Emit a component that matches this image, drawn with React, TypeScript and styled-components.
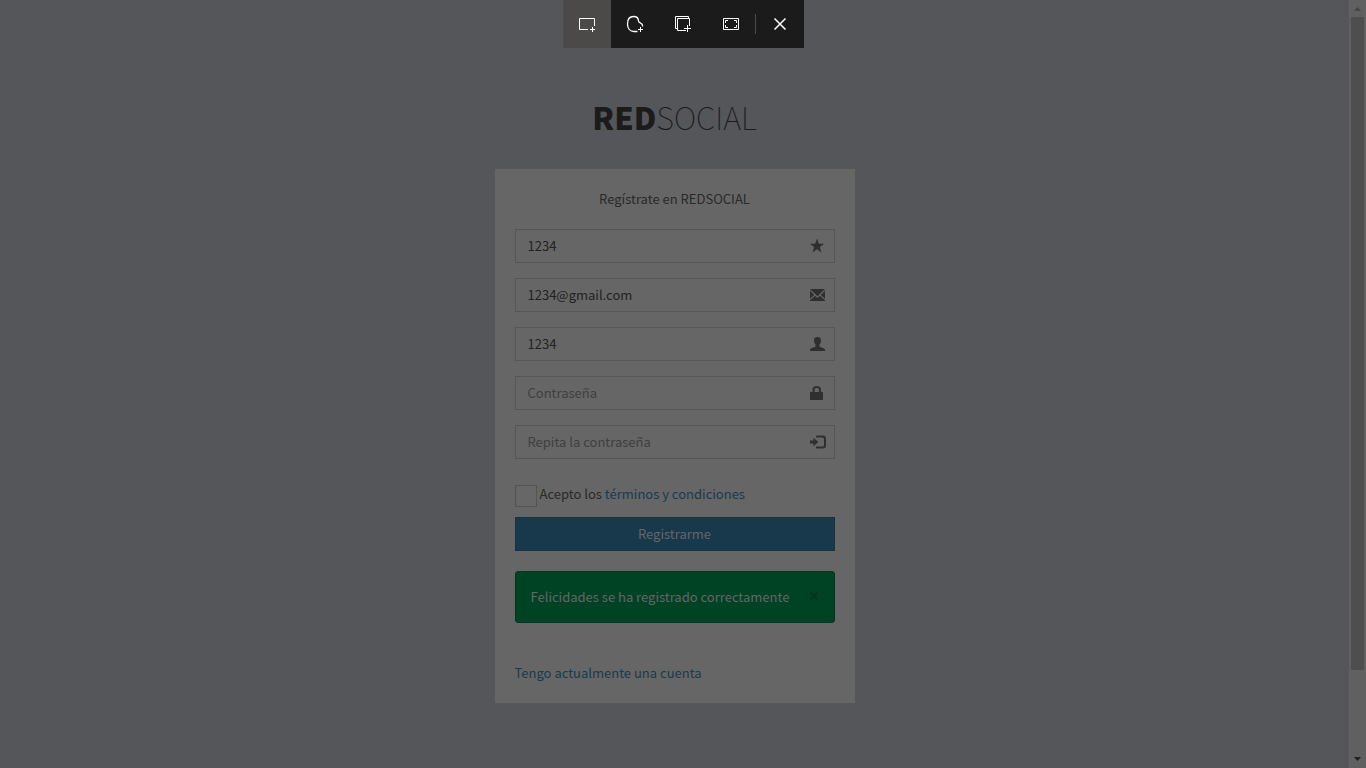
import React from "react";
import styled, { createGlobalStyle } from "styled-components";

const GlobalStyle = createGlobalStyle`
  * { box-sizing: border-box; }
  body {
    margin: 0;
    background: #545659;
    color: #292929;
    font-family: "Noto Sans CJK SC", "Noto Sans", sans-serif;
    font-size: 13px;
    line-height: 20px;
  }
`;

const Screen = styled.div`
  display: flex;
  min-height: 100vh;
`;

const Page = styled.main`
  flex: 1;
  display: flex;
  flex-direction: column;
  align-items: center;
  padding: 94px 16px 60px;
`;

const Logo = styled.h1`
  margin: 0 0 29px;
  color: #1b1b1b;
  font-size: 31px;
  font-weight: 100;
  line-height: 46px;

  b {
    font-weight: 900;
  }
`;

const Card = styled.section`
  width: 100%;
  max-width: 360px;
  padding: 20px;
  background: #666666;
`;

const Intro = styled.p`
  margin: 0 0 20px;
  text-align: center;
`;

const Form = styled.form`
  display: flex;
  flex-direction: column;
  gap: 15px;
`;

const Field = styled.label`
  display: flex;
  align-items: center;
  height: 34px;
  padding: 0 8px 0 12px;
  border: 1px solid #545659;
  color: #2f2f2f;
`;

const Input = styled.input`
  flex: 1;
  min-width: 0;
  padding: 0;
  border: 0;
  outline: 0;
  background: transparent;
  color: #222222;
  font: inherit;

  &::placeholder {
    color: #3f3f3f;
    opacity: 1;
  }
`;

const Glyph = styled.svg`
  width: 17px;
  height: 16px;
  fill: currentColor;
`;

const Terms = styled.div`
  display: flex;
  gap: 3px;
  margin-top: 10px;
`;

const Checkbox = styled.input`
  appearance: none;
  width: 22px;
  height: 22px;
  margin: 1px 0 0;
  border: 1px solid #545452;
  background: #676767;
`;

const Link = styled.a`
  color: #183a4d;
  text-decoration: none;
`;

const Submit = styled.button`
  height: 34px;
  margin-top: -5px;
  padding: 0;
  border: 1px solid #163243;
  background: #18384b;
  color: #666666;
  font: inherit;
`;

const Alert = styled.div`
  display: flex;
  align-items: center;
  justify-content: space-between;
  min-height: 52px;
  margin: 20px 0 40px;
  padding: 15px;
  border: 1px solid #00381e;
  border-radius: 3px;
  background: #004224;
  color: #666666;
`;

const Dismiss = styled.button`
  width: 10px;
  height: 20px;
  padding: 0;
  border: 0;
  background: transparent;
  color: #00351d;

  svg {
    display: block;
    width: 10px;
    height: 20px;
  }
`;

const Scrollbar = styled.div`
  display: flex;
  flex-direction: column;
  align-items: center;
  width: 17px;
  height: 100vh;
  background: #606060;
`;

const Arrow = styled.svg`
  width: 17px;
  height: 17px;
`;

const Track = styled.div`
  flex: 1;
  width: 13px;
`;

const Thumb = styled.div`
  height: 89%;
  background: #4e4e4e;
`;

const Toolbar = styled.div`
  position: fixed;
  top: 0;
  left: calc(50% - 120px);
  display: flex;
  align-items: center;
  height: 48px;
  background: #1b1b1b;
`;

const Tool = styled.button<{ $active?: boolean }>`
  display: flex;
  width: 48px;
  height: 48px;
  padding: 0;
  border: 0;
  background: ${(p) => (p.$active ? "#4c4a48" : "transparent")};

  svg {
    width: 48px;
    height: 48px;
    fill: none;
    stroke: #ffffff;
  }
`;

const Divider = styled.span`
  width: 1px;
  height: 20px;
  background: #4b4b4b;
`;

const fields = [
  {
    label: "Nombre",
    type: "text",
    value: "1234",
    icon: <path d="M8 .5l1.800 5.200H15.200l-4.400 3.300 1.700 5.500L8 11.300l-4.500 3.200L5.200 9 .8 5.700h5.400z" />,
  },
  {
    label: "Correo",
    type: "email",
    value: "1234@gmail.com",
    icon: <path d="M1 2h15L8.500 9.200zM1 3.600L5.200 7.900 1 11.800zM16 3.600v8.200l-4.200-3.900zM6.100 8.800l2.400 2.300 2.400-2.300L16 13.300V14H1v-.7z" />,
  },
  {
    label: "Usuario",
    type: "text",
    value: "1234",
    icon: <path d="M5 4.300C5 2.200 6.200 1 8.500 1S12 2.200 12 4.300c0 1.900-.6 3.400-1.500 4.300v1.300c0 .5.300.8.800 1l3.200 1.300c1 .4 1.500 1 1.500 1.800v1H1v-1c0-.8.500-1.400 1.500-1.800l3.200-1.300c.5-.2.800-.5.800-1V8.600C5.600 7.700 5 6.200 5 4.300z" />,
  },
  {
    label: "Contraseña",
    type: "password",
    value: "",
    icon: <path fillRule="evenodd" d="M3.500 7V4.500C3.500 2.200 5 1 7.700 1S12 2.200 12 4.500V7h1.300q.7 0 .7.700v6.600q0 .7-.7.700H1.700Q1 15 1 14.300V7.700Q1 7 1.700 7zM5.600 7h4.300V4.700c0-1.100-.7-1.700-2.100-1.700s-2.200.6-2.200 1.700z" />,
  },
  {
    label: "Repita la contraseña",
    type: "password",
    value: "",
    icon: (
      <>
        <path d="M1 6.500h3.500V3.700L9.300 8l-4.800 4.300V9.500H1z" />
        <path d="M7 3.500V2.500Q7 1.500 8 1.500h6q3 0 3 3v7q0 3-3 3H8q-1 0-1-1v-1h6.500q1.500 0 1.500-1.500V5q0-1.500-1.500-1.500z" />
      </>
    ),
  },
];

export default function App() {
  return (
    <>
      <GlobalStyle />
      <Screen>
        <Page>
          <Logo>
            <b>RED</b>SOCIAL
          </Logo>
          <Card>
            <Intro>Regístrate en REDSOCIAL</Intro>
            <Form onSubmit={(e) => e.preventDefault()}>
              {fields.map((f) => (
                <Field key={f.label + f.type}>
                  <Input
                    type={f.type}
                    defaultValue={f.value}
                    placeholder={f.label}
                    aria-label={f.label}
                  />
                  <Glyph viewBox="0 0 17 16" aria-hidden="true">
                    {f.icon}
                  </Glyph>
                </Field>
              ))}
              <Terms>
                <Checkbox id="terms" type="checkbox" />
                <label htmlFor="terms">
                  Acepto los <Link href="#terminos">términos y condiciones</Link>
                </label>
              </Terms>
              <Submit type="submit">Registrarme</Submit>
            </Form>
            <Alert role="status">
              Felicidades se ha registrado correctamente
              <Dismiss type="button" aria-label="Cerrar">
                <svg viewBox="0 0 10 20" fill="none" stroke="currentColor" strokeWidth="2">
                  <path d="M1 5l8 8M9 5l-8 8" />
                </svg>
              </Dismiss>
            </Alert>
            <Link href="#cuenta">Tengo actualmente una cuenta</Link>
          </Card>
        </Page>
        <Scrollbar aria-hidden="true">
          <Arrow viewBox="0 0 17 17">
            <path d="M5 11h7L8.500 7z" fill="#454545" />
          </Arrow>
          <Track>
            <Thumb />
          </Track>
          <Arrow viewBox="0 0 17 17">
            <path d="M5 6h7L8.500 10z" fill="#202020" />
          </Arrow>
        </Scrollbar>
      </Screen>
      <Toolbar role="toolbar" aria-label="Recorte">
        <Tool $active type="button" aria-label="Recorte rectangular">
          <svg viewBox="0 0 48 48">
            <path d="M25 29.500H16.500v-11h15V26M29.500 27v5M27 29.500h5" />
          </svg>
        </Tool>
        <Tool type="button" aria-label="Recorte de forma libre">
          <svg viewBox="0 0 48 48">
            <path strokeWidth="1.300" d="M26.500 31.500H23c-4 0-6.500-3-6.500-7.500 0-5 2.500-7.500 6-7.500 3.200 0 5 1.800 5 4.500 0 1.300 1 1.700 2.200 2.200 1.300.6 2 1.800 2 3.300" />
            <path d="M29.500 27v5M27 29.500h5" />
          </svg>
        </Tool>
        <Tool type="button" aria-label="Recorte de ventana">
          <svg viewBox="0 0 48 48">
            <path d="M18 28.500h-1.500v-12h13V18M27 30.500h-8.500v-12h12V26M28.500 25v7M25 28.500h7" />
          </svg>
        </Tool>
        <Tool type="button" aria-label="Recorte de pantalla completa">
          <svg viewBox="0 0 48 48">
            <path d="M16.500 18.500h15v11h-15zM21 20.500h-2.500V23M27 20.500h2.500V23M21 27.500h-2.500V25M27 27.500h2.500V25" />
          </svg>
        </Tool>
        <Divider />
        <Tool type="button" aria-label="Cerrar recorte">
          <svg viewBox="0 0 48 48" strokeWidth="1.500">
            <path d="M18.500 18.500l11 11M29.500 18.500l-11 11" />
          </svg>
        </Tool>
      </Toolbar>
    </>
  );
}
